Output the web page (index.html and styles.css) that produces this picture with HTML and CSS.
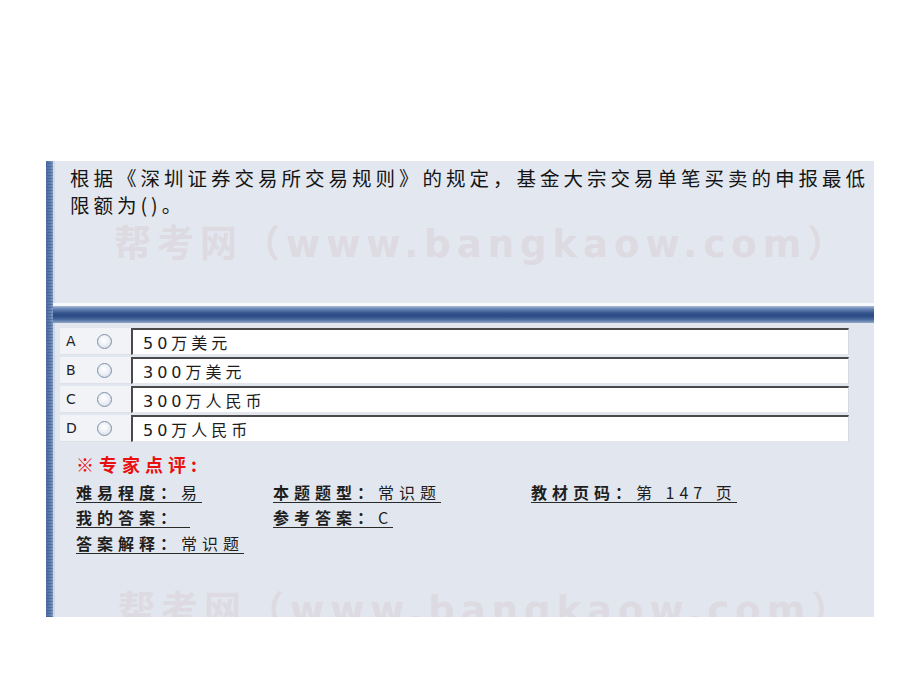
FILE: index.html
```html
<!DOCTYPE html>
<html lang="zh">
<head>
<meta charset="utf-8">
<title>题目</title>
<link rel="stylesheet" href="styles.css">
</head>
<body>
<div class="page">
  <div class="panel">
    <div class="stripe"></div>
    <div class="main">
      <div class="question">
        <p class="q-text">根据《深圳证券交易所交易规则》的规定，基金大宗交易单笔买卖的申报最低<br>限额为()。</p>
        <div class="watermark">帮考网（www.bangkaow.com）</div>
      </div>
      <div class="hilite"></div>
      <div class="bar"></div>
      <div class="lower">
        <div class="options">
          <div class="opt">
            <div class="opt-label"><span class="letter">A</span><span class="radio"></span></div>
            <div class="opt-box">50万美元</div>
          </div>
          <div class="opt">
            <div class="opt-label"><span class="letter">B</span><span class="radio"></span></div>
            <div class="opt-box">300万美元</div>
          </div>
          <div class="opt">
            <div class="opt-label"><span class="letter">C</span><span class="radio"></span></div>
            <div class="opt-box">300万人民币</div>
          </div>
          <div class="opt">
            <div class="opt-label"><span class="letter">D</span><span class="radio"></span></div>
            <div class="opt-box">50万人民币</div>
          </div>
        </div>
        <div class="expert">
          <div class="expert-title">※专家点评:</div>
          <div class="info">
            <span class="item"><b>难易程度：</b>易</span>
            <span class="item"><b>本题题型：</b>常识题</span>
            <span class="item"><b>教材页码：</b>第 147 页</span>
            <span class="item"><b>我的答案：</b>&nbsp;</span>
            <span class="item"><b>参考答案：</b>C</span>
            <span class="item empty"></span>
            <span class="item"><b>答案解释：</b>常识题</span>
          </div>
        </div>
        <div class="watermark wm-bottom">帮考网（www.bangkaow.com）</div>
      </div>
    </div>
  </div>
</div>
</body>
</html>
```

FILE: styles.css
```css
html, body {
  margin: 0;
  padding: 0;
  background: #ffffff;
}
body {
  font-family: "Noto Sans CJK SC", "DejaVu Sans", sans-serif;
  color: #1a1a1a;
}
.page {
  padding: 161px 0 0 46px;
}
.panel {
  display: flex;
  width: 828px;
  height: 456px;
  overflow: hidden;
}
.stripe {
  width: 7px;
  flex: none;
  background:
    repeating-linear-gradient(0deg, rgba(40,70,120,0.35) 0 1px, rgba(255,255,255,0) 1px 3px),
    linear-gradient(90deg, #4f6fa3 0%, #5e7db0 60%, #8aa2c8 100%);
}
.main {
  flex: 1;
  display: flex;
  flex-direction: column;
  min-width: 0;
  min-height: 0;
}
.question {
  flex: none;
  height: 142px;
  background: #e3e8f0;
  padding: 3px 0 0 15px;
  box-sizing: border-box;
  border-left: 2px solid #d2dae6;
  overflow: hidden;
}
.q-text {
  margin: 0;
  font-size: 19.5px;
  line-height: 27px;
  letter-spacing: 4px;
  color: #151515;
  white-space: nowrap;
}
.watermark {
  font-family: "DejaVu Sans", "Noto Sans CJK SC", sans-serif;
  font-weight: bold;
  font-size: 37px;
  letter-spacing: 6px;
  color: #dddae1;
  white-space: nowrap;
  margin: 5px 0 0 44px;
  line-height: 44px;
}
.hilite {
  flex: none;
  height: 3px;
  background: #f7f9fc;
}
.bar {
  flex: none;
  height: 17px;
  background: linear-gradient(180deg, #aabcd7 0%, #6582b2 18%, #2f5089 45%, #2c4c85 60%, #4c6c9f 80%, #93a9c9 100%);
}
.lower {
  flex: 1;
  min-height: 0;
  overflow: hidden;
  background: #e2e7ef;
  padding: 5px 0 0 5px;
  border-left: 2px solid #cfd8e5;
  display: flex;
  flex-direction: column;
}
.options {
  flex: none;
  width: 789px;
  display: flex;
  flex-direction: column;
  gap: 2px;
}
.opt {
  display: flex;
  height: 27px;
}
.opt-label {
  width: 71px;
  flex: none;
  display: flex;
  align-items: center;
  background: #f1f3f7;
  padding-left: 6px;
  box-sizing: border-box;
  border-bottom: 1px solid #dde2ea;
}
.letter {
  font-family: "DejaVu Sans", sans-serif;
  font-size: 14px;
  color: #222;
  width: 31px;
}
.radio {
  width: 15px;
  height: 15px;
  border-radius: 50%;
  box-sizing: border-box;
  border: 1px solid #7f91ab;
  background: radial-gradient(circle at 45% 40%, #ffffff 0%, #eef1f6 45%, #c9d2df 100%);
}
.opt-box {
  flex: 1;
  background: #ffffff;
  border-top: 2px solid #4a4a4a;
  border-left: 2px solid #4a4a4a;
  border-right: 1px solid #d5d9e0;
  border-bottom: 1px solid #e4e7ec;
  box-sizing: border-box;
  padding-left: 10px;
  font-family: "DejaVu Sans", "Noto Sans CJK SC", sans-serif;
  font-size: 16px;
  letter-spacing: 4px;
  line-height: 27px;
  color: #1c1c1c;
}
.expert {
  flex: none;
  padding: 11px 0 0 16px;
}
.expert-title {
  color: #e81010;
  font-weight: bold;
  font-size: 18px;
  letter-spacing: 5px;
  line-height: 22px;
}
.info {
  display: grid;
  grid-template-columns: 197px 258px 260px;
  grid-auto-rows: 25.5px;
  margin-top: 5px;
  font-size: 16px;
  letter-spacing: 5px;
  color: #1e1e1e;
}
.item {
  justify-self: start;
  align-self: center;
  line-height: 19px;
  border-bottom: 1px solid #2a2a2a;
  white-space: nowrap;
}
.item.empty {
  border-bottom: none;
}
.item b {
  font-weight: bold;
}
.wm-bottom {
  flex: none;
  margin-top: 32px;
  margin-left: 58px;
}
```
